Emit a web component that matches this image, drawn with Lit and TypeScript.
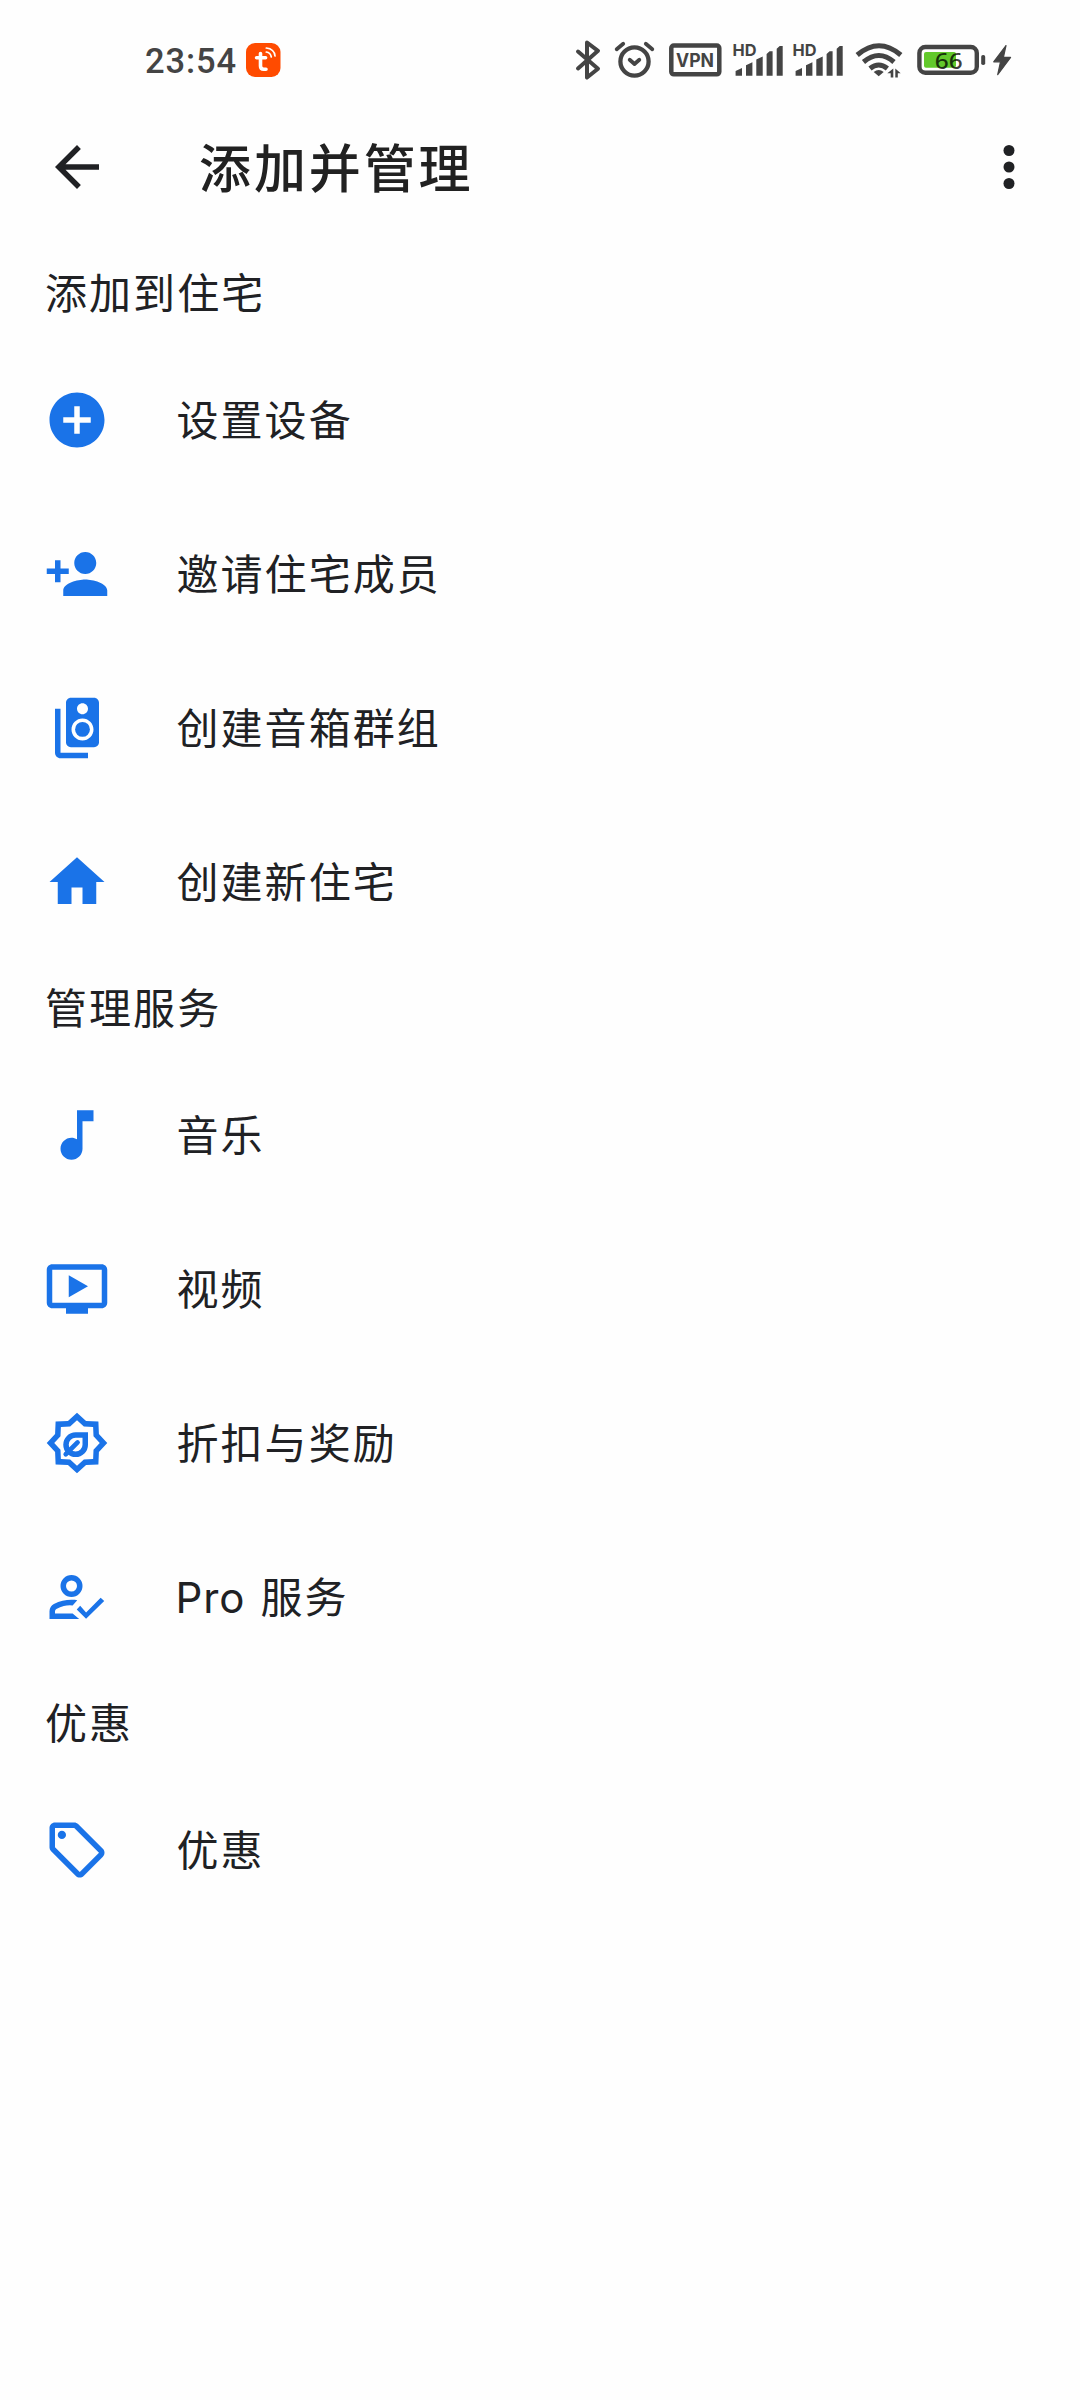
import { LitElement, html, svg, css } from "lit";
import { customElement, property } from "lit/decorators.js";

const icons: Record<string, unknown> = {
  back: svg`<path d="M20 11H7.83l5.59-5.59L12 4l-8 8 8 8 1.41-1.41L7.83 13H20z"/>`,
  more: svg`<circle cx="12" cy="6" r="2"/><circle cx="12" cy="12" r="2"/><circle cx="12" cy="18" r="2"/>`,
  add: svg`<path d="M12 2C6.48 2 2 6.48 2 12s4.48 10 10 10 10-4.48 10-10S17.52 2 12 2zm5 11h-4v4h-2v-4H7v-2h4V7h2v4h4z"/>`,
  person: svg`<path d="M15 12c2.21 0 4-1.79 4-4s-1.79-4-4-4-4 1.79-4 4 1.79 4 4 4zm-9-2V7H4v3H1v2h3v3h2v-3h3v-2zm9 4c-2.67 0-8 1.34-8 4v2h16v-2c0-2.66-5.33-4-8-4z"/>`,
  speaker: svg`<path d="M18.2 1H9.8C8.81 1 8 1.81 8 2.8v14.4c0 .99.81 1.79 1.8 1.79l8.4.01c.99 0 1.8-.81 1.8-1.8V2.8c0-.99-.81-1.8-1.8-1.8zM14 3c1.1 0 2 .89 2 2s-.9 2-2 2-2-.89-2-2 .9-2 2-2zm0 13.500c-2.210 0-4-1.790-4-4s1.790-4 4-4 4 1.790 4 4-1.790 4-4 4z"/><circle cx="14" cy="12.500" r="2.700"/><path d="M6 5H4v16c0 1.100.890 2 2 2h10v-2H6z"/>`,
  home: svg`<path d="M10 20v-6h4v6h5v-8h3L12 3 2 12h3v8z"/>`,
  music: svg`<path d="M12 3v10.550c-.590-.340-1.270-.550-2-.550-2.210 0-4 1.790-4 4s1.790 4 4 4 4-1.790 4-4V7h4V3z"/>`,
  video: svg`<path d="M21 3H3c-1.110 0-2 .890-2 2v12c0 1.100.890 2 2 2h5v2h8v-2h5c1.100 0 2-.900 2-2V5c0-1.110-.900-2-2-2zm0 14H3V5h18zm-5-6l-7 4V7z"/>`,
  reward: svg`<path fill-rule="evenodd" d="M12 1l3.300 3.030 4.480.190.190 4.480L23 12l-3.030 3.300-.190 4.480-4.480.190L12 23l-3.300-3.030-4.480-.190-.190-4.480L1 12l3.030-3.300.190-4.480 4.480-.190zM12 3.720L9.510 6l-3.370.140L6 9.510 3.720 12 6 14.490l.140 3.370 3.370.140L12 20.280 14.490 18l3.370-.140.140-3.370L20.280 12 18 9.510l-.140-3.370L14.490 6z"/>
    <path fill="none" stroke="currentColor" stroke-width="2" d="M15 9.100H11.500a3.500 3.500 0 0 0 0 7 3.500 3.500 0 0 0 3.500-3.500z"/>
    <path fill="none" stroke="currentColor" stroke-width="1.700" stroke-linecap="round" d="M7.900 16.100l4.300-4.300"/>`,
  pro: svg`<path fill-rule="evenodd" d="M10 4a4 4 0 1 0 0 8 4 4 0 0 0 0-8zm0 2a2 2 0 1 1 0 4 2 2 0 0 1 0-4z"/>
    <path d="M2 20v-2.800q0-.850.430-1.560.430-.700 1.170-1.090 1.550-.780 3.150-1.160Q8.350 13 10 13q.600 0 1.150.040.600.060.950.160l-1.700 1.850Q8.600 14.900 7.200 15.300 5.850 15.700 4.500 16.350q-.230.130-.360.350T4 17.200V18h6.400l2.400 2z"/>
    <path d="M20.600 12.250l-5.300 5.350-2.150-2.400L11.900 16.500l3.400 3.450 6.600-6.500z"/>`,
  tag: svg`<path d="M21.410 11.580l-9-9C12.050 2.220 11.550 2 11 2H4c-1.100 0-2 .900-2 2v7c0 .550.220 1.050.590 1.420l9 9c.360.360.860.580 1.410.580s1.050-.220 1.410-.590l7-7c.370-.360.590-.860.590-1.410s-.230-1.060-.590-1.420zM13 20.010L4 11V4h7l9 8.990z"/><circle cx="6.500" cy="6.500" r="1.500"/>`,
};

@customElement("ui-icon")
class UiIcon extends LitElement {
  static styles = css`
    :host { display: block; width: 66px; height: 66px; flex: none; }
    .glyph { display: block; width: 66px; height: 66px; fill: currentColor; }
  `;
  @property() name = "";
  render() {
    return html`<svg class="glyph" viewBox="0 0 24 24">${icons[this.name]}</svg>`;
  }
}

const signal = svg`
  <text class="hd" x="732.500" y="56" textLength="24" lengthAdjust="spacingAndGlyphs">HD</text>
  <path d="M735.600 71l6.400-3v7.700h-6.400zM746 65.200l6.400-3v13.500H746zM756.300 59.500l6.400-3v19.200h-6.400zM766.600 54l3-2.700h3v24.400h-6zM776.700 48.700l3-2.700h3v29.700h-6z"/>`;

@customElement("status-bar")
class StatusBar extends LitElement {
  static styles = css`
    :host { display: flex; height: 120px; align-items: center; box-sizing: border-box;
      padding-left: 145px; color: #444; }
    .time { font: 500 34.500px/50px Roboto, "Liberation Sans", sans-serif; letter-spacing: .9px; width: 99px;
      padding-top: 2px; }
    .icons { display: flex; margin-left: 278px; }
    .ic { display: block; height: 48px; fill: #444; overflow: visible; }
    .line { fill: none; stroke: #444; stroke-linecap: round; stroke-linejoin: round; }
    .butt { stroke-linecap: butt; }
    .hd { font: 700 16.500px Inter, sans-serif; }
    .vpn { font: 700 18.800px Inter, sans-serif; }
    .pct { font: 500 22.500px "Noto Sans", sans-serif; fill: #000; fill-opacity: .76; }
  `;
  render() {
    return html`
      <span class="time">23:54</span>
      <svg class="ic" width="38" viewBox="244 36 38 48">
        <rect x="246" y="43" width="34.500" height="34" rx="9" fill="#ff4b00"/>
        <g fill="none" stroke="#fff" stroke-linecap="round">
          <path stroke-width="3.600" d="M260.500 53.500v12.500q0 3.200 3.200 3.200h2.300M256.600 57.800h9"/>
          <path stroke-width="1.700" d="M266.300 52q4.200.500 5 5M266.300 48q8 .800 8.700 8"/>
        </g>
      </svg>
      <div class="icons">
        <svg class="ic" width="48" viewBox="560 36 48 48">
          <path class="line" stroke-width="4" d="M578 51.500l20 17.300-11 8.700V42.500l11 8.300L578 68.500"/>
        </svg>
        <svg class="ic" width="54" viewBox="608 36 54 48">
          <circle class="line" stroke-width="4.300" cx="634.500" cy="61.500" r="14.100"/>
          <path class="line" stroke-width="3.800" d="M629.700 59.800l4.800 4.200 4.800-4.200M616.700 49.300l6.500-5.500M652.300 49.300l-6.500-5.500"/>
        </svg>
        <svg class="ic" width="66" viewBox="662 36 66 48">
          <rect class="line" stroke-width="4.500" x="671.300" y="45.600" width="48" height="28.700" rx="2.500"/>
          <text class="vpn" x="676" y="66.800" textLength="38" lengthAdjust="spacingAndGlyphs">VPN</text>
        </svg>
        <svg class="ic" width="60" viewBox="728 36 60 48">${signal}</svg>
        <svg class="ic" width="60" viewBox="728 36 60 48">${signal}</svg>
        <svg class="ic" width="60" viewBox="848 36 60 48">
          <path class="line butt" stroke-width="5" d="M857.200 55q21.800-18.500 43.600 0M863.500 62q15.500-13 30.500 0M870 68.500q8.700-7 17.400 0"/>
          <path d="M873.700 72q5-4 10 0l-5 4.300z"/>
          <path d="M893.300 68.500v9h-2.600v-4.200h-3.400zM895.300 68.500l5.400 4.700h-2.900v4.300h-2.500z"/>
        </svg>
        <svg class="ic" width="80" viewBox="908 36 80 48">
          <rect x="924" y="52" width="32" height="15.800" rx="2" fill="#62c92b"/>
          <rect class="line" stroke-width="4.400" x="919.400" y="47" width="57.400" height="25.800" rx="6"/>
          <rect x="981.200" y="55" width="4" height="10" rx="1.800"/>
          <text class="pct" x="934.800" y="68.800" textLength="28" lengthAdjust="spacingAndGlyphs">66</text>
        </svg>
        <svg class="ic" width="30" viewBox="988 36 30 48">
          <path stroke="#444" stroke-width="1.200" stroke-linejoin="round" d="M1006 45.500l-12.300 16.300h6.800l-2.800 12.900 12.900-17.300h-7.200z"/>
        </svg>
      </div>`;
  }
}

const sections = [
  { title: "添加到住宅", rows: [["add", "设置设备"], ["person", "邀请住宅成员"], ["speaker", "创建音箱群组"], ["home", "创建新住宅"]] },
  { title: "管理服务", rows: [["music", "音乐"], ["video", "视频"], ["reward", "折扣与奖励"], ["pro", "Pro 服务"]] },
  { title: "优惠", rows: [["tag", "优惠"]] },
];

// Latin letters are set tighter than the ideographs around them.
const spaced = (text: string) => {
  const latin = text.match(/^[A-Za-z]+ ?/)?.[0] ?? "";
  return latin ? html`<span class="latin">${latin}</span>${text.slice(latin.length)}` : text;
};

@customElement("app-root")
class AppRoot extends LitElement {
  static styles = css`
    :host { display: block; width: 1080px; height: 2400px; background: #fefefe; color: #202124;
      font-family: Inter, "Noto Sans CJK SC", sans-serif; overflow: hidden; }
    .bar { display: flex; align-items: center; height: 94px; padding: 0 38px 0 44px; }
    .title { flex: 1; margin: 0 0 0 89px; font-size: 52px; font-weight: 500; line-height: 72px;
      letter-spacing: 2.900px; color: #212121; padding-top: 6px; }
    .list { padding-top: 30px; }
    .head { margin: 0; height: 99px; box-sizing: border-box; padding: 21px 0 0 45px;
      font-size: 42px; font-weight: 400; line-height: 58px; letter-spacing: 2.050px; }
    .row { display: flex; align-items: center; height: 154px; padding-left: 44px; }
    .row-icon { color: #1a73e8; }
    .label { margin-left: 66.500px; padding-top: 2px; font-size: 42px; line-height: 58px; letter-spacing: 2.050px; }
    .latin { letter-spacing: .9px; margin: 0 2.500px 0 -1px; white-space: pre; }
  `;
  render() {
    return html`
      <status-bar></status-bar>
      <header class="bar">
        <ui-icon name="back"></ui-icon>
        <h1 class="title">添加并管理</h1>
        <ui-icon name="more"></ui-icon>
      </header>
      <main class="list">
        ${sections.map((s) => html`
          <h2 class="head">${s.title}</h2>
          ${s.rows.map(([icon, label]) => html`
            <div class="row"><ui-icon class="row-icon" name=${icon}></ui-icon><span class="label">${spaced(label)}</span></div>`)}
        `)}
      </main>`;
  }
}
